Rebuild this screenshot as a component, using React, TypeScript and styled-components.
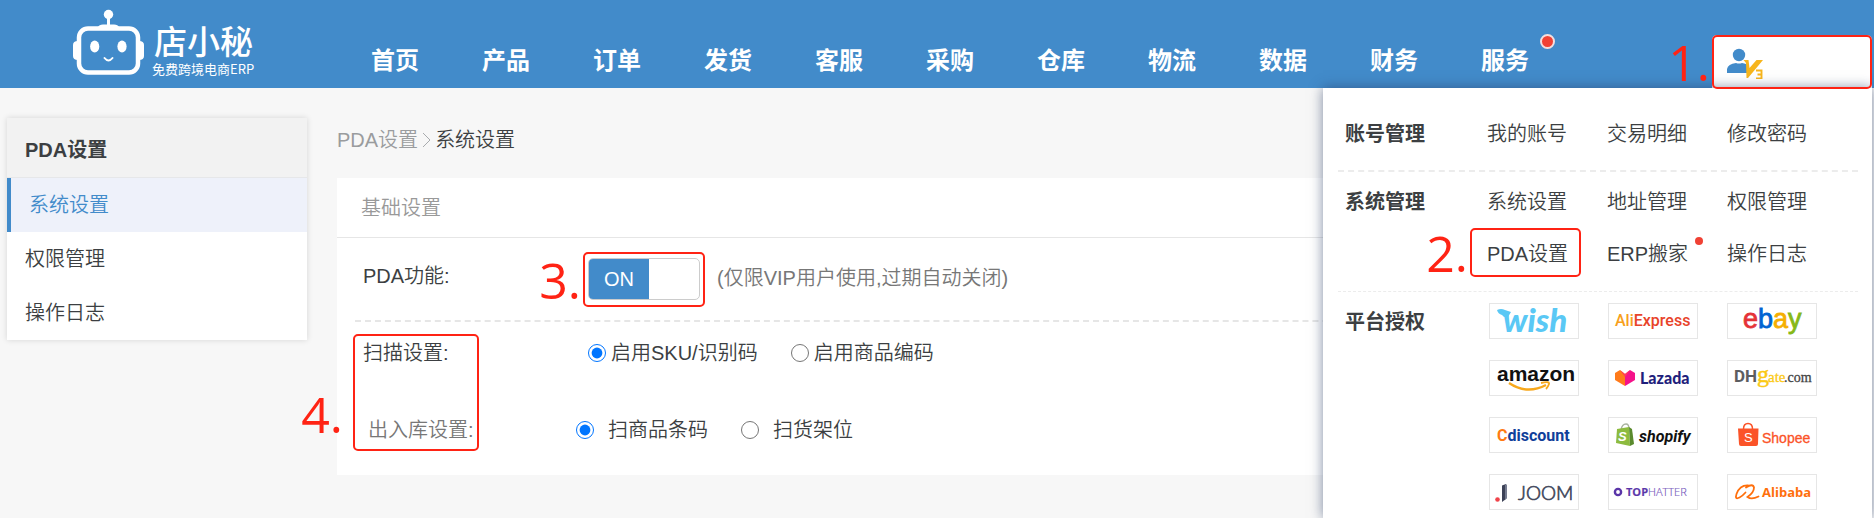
import React, { useState } from "react";
import styled, { createGlobalStyle, css } from "styled-components";

const blue = "#428bca";
const red = "#ff2314";
const ink = "#3c3f42";

const GlobalStyle = createGlobalStyle`
  * { box-sizing: border-box; }
  body {
    margin: 0;
    background: #f7f7f7;
    color: ${ink};
    font-family: "Liberation Sans", "Noto Sans CJK SC", sans-serif;
    font-size: 20px;
    font-weight: 350;
  }
  a { color: inherit; text-decoration: none; }
  button, input { font: inherit; margin: 0; }
  ul { list-style: none; margin: 0; padding: 0; }
  h2, h3, p { margin: 0; font-size: inherit; }
`;

/* ---------- step markers ---------- */

const Frame = styled.span<{ $inset: string; $width?: number }>`
  position: absolute;
  inset: ${(p) => p.$inset};
  ${(p) => p.$width && `width: ${p.$width}px;`}
  z-index: 3;
  display: flex;
  align-items: center;
  border: 2px solid ${red};
  border-radius: 5px;
  pointer-events: none;
`;

const StepNumber = styled.span<{ $low?: boolean }>`
  position: absolute;
  right: 100%;
  margin-right: ${(p) => (p.$low ? 12 : 4)}px;
  ${(p) => p.$low && "bottom: 10px;"}
  color: ${red};
  font: 400 50px/1 "Open Sans", "Noto Sans", sans-serif;
`;

type StepProps = { n: number; inset: string; width?: number; low?: boolean };

const Step = ({ n, inset, width, low }: StepProps) => (
  <Frame $inset={inset} $width={width}>
    <StepNumber $low={low}>{n}.</StepNumber>
  </Frame>
);

/* ---------- header ---------- */

const Header = styled.header`
  display: flex;
  height: 88px;
  padding: 0 2px 0 73px;
  background: ${blue};
`;

const LogoLink = styled.a`
  flex: none;
  width: 298px;
  color: #fff;
`;

const Nav = styled.nav`
  flex: 1;
  display: flex;
  gap: 63px;
  padding-top: 41px;
  color: #fff;
  font-size: 24px;
  font-weight: 700;
  line-height: 40px;
  white-space: nowrap;
`;

const NavLink = styled.a`
  position: relative;
`;

const dot = css`
  position: absolute;
  border-radius: 50%;
  background: #f04134;
`;

const NavDot = styled.span`
  ${dot}
  left: 100%;
  bottom: 100%;
  width: 15px;
  height: 15px;
  margin: 0 0 -8px 11px;
  border: 2px solid #f3dede;
`;

const MenuDot = styled.span`
  ${dot}
  left: 100%;
  top: 9px;
  width: 8px;
  height: 8px;
  margin-left: 7px;
`;

const Account = styled.div`
  position: relative;
  flex: none;
  align-self: flex-end;
  width: 160px;
`;

const AccountButton = styled.button`
  display: block;
  width: 100%;
  height: 53px;
  padding: 12px 14px;
  border: 0;
  border-radius: 5px 5px 0 0;
  background: #fff;
  text-align: left;
  cursor: pointer;
`;

const Menu = styled.div`
  position: absolute;
  top: 100%;
  right: 0;
  z-index: 2;
  width: 549px;
  padding: 0 14px 8px 15px;
  background: #fff;
  box-shadow: 0 0 12px rgba(40, 60, 100, 0.6);
`;

const MenuSection = styled.section<{ $pad: string; $line?: number }>`
  display: grid;
  grid-template-columns: 142px 1fr;
  padding: ${(p) => p.$pad};
  border-bottom: ${(p) => p.$line ?? 0}px dashed #ececec;
`;

const MenuTitle = styled.h3<{ $height?: number }>`
  line-height: ${(p) => p.$height ?? 52}px;
  font-weight: 700;
`;

const MenuLinks = styled.ul`
  display: grid;
  grid-template-columns: repeat(3, 120px);
  line-height: 52px;
`;

const MenuItem = styled.li`
  position: relative;
  justify-self: start;
`;

const Brands = styled.ul`
  display: grid;
  grid-template-columns: repeat(3, 90px);
  gap: 21px 29px;
  padding-left: 2px;
`;

const BrandLink = styled.a`
  display: block;
  height: 36px;
  border: 1px solid #e6e6e6;
  svg { display: block; }
`;

/* ---------- page ---------- */

const Page = styled.div`
  display: flex;
  align-items: flex-start;
  gap: 30px;
  padding: 30px 7px 43px;
`;

const Sidebar = styled.aside`
  flex: none;
  width: 300px;
  background: #fff;
  box-shadow: 0 0 6px rgba(0, 0, 0, 0.14);
`;

const SideTitle = styled.h2`
  padding: 5px 18px 0;
  border-bottom: 1px solid #e6e7e9;
  background: #f2f2f2;
  line-height: 54px;
  font-weight: 700;
`;

const SideLink = styled.a<{ $active?: boolean }>`
  display: block;
  padding: 0 18px;
  line-height: 54px;
  ${(p) =>
    p.$active &&
    css`
      border-left: 4px solid ${blue};
      background: #eef1fa;
      color: ${blue};
    `}
`;

const Main = styled.main`
  flex: 1;
  min-width: 0;
`;

const Breadcrumb = styled.nav`
  display: flex;
  align-items: center;
  gap: 4px;
  margin-bottom: 16px;
  line-height: 44px;
  a { color: #9a9c9e; }
`;

const Card = styled.section`
  padding-bottom: 27px;
  background: #fff;
`;

const CardTitle = styled.h2`
  padding: 2px 24px 0;
  border-bottom: 1px solid #e6e6e6;
  color: #999;
  font-weight: inherit;
  line-height: 57px;
`;

const Settings = styled.form`
  margin-left: 18px;
`;

const Row = styled.div`
  display: flex;
  align-items: flex-start;
  padding: 20px 8px;
  border-bottom: 2px dashed #e6e6e6;
  line-height: 36px;
`;

const RowLabel = styled.span`
  flex: none;
  width: 225px;
`;

const SwitchWrap = styled.span`
  position: relative;
  margin-right: 17px;
`;

const Switch = styled.button`
  display: flex;
  width: 112px;
  height: 42px;
  padding: 0;
  overflow: hidden;
  border: 1px solid #ccc;
  border-radius: 5px;
  background: #fff;
  cursor: pointer;
`;

const SwitchHalf = styled.span<{ $on: boolean }>`
  width: 60px;
  margin-left: ${(p) => (p.$on ? 0 : 50)}px;
  background: ${(p) => (p.$on ? blue : "#bbb")};
  color: #fff;
  font-weight: 400;
  line-height: 40px;
`;

const Hint = styled.p`
  line-height: 40px;
  color: #777;
`;

const ScanGroup = styled.div`
  position: relative;
  display: grid;
  gap: 41px;
  padding: 13px 8px 0;
`;

const Field = styled.fieldset<{ $nested?: boolean }>`
  display: flex;
  min-width: 0;
  margin: 0;
  padding: 0 0 0 ${(p) => (p.$nested ? 5 : 0)}px;
  border: 0;
  line-height: 36px;
`;

const FieldName = styled.span<{ $nested?: boolean }>`
  flex: none;
  width: ${(p) => (p.$nested ? 208 : 225)}px;
  color: ${(p) => (p.$nested ? "#777" : ink)};
`;

const Choice = styled.label<{ $wide?: boolean }>`
  display: flex;
  align-items: center;
  gap: ${(p) => (p.$wide ? 14 : 5)}px;
  margin-right: 33px;
  input { width: 18px; height: 18px; }
`;

/* ---------- drawings ---------- */

const Logo = () => (
  <svg width="190" height="88" viewBox="0 0 190 88" fill="none" role="img" aria-label="店小秘">
    <circle cx="35.500" cy="14.500" r="4.700" fill="#fff" />
    <path d="M35.500 17v9" stroke="#fff" strokeWidth="3" />
    <path d="M25 27q1-2.500 5-2.500h11q4 0 5 2.500z" fill="#fff" />
    <rect x="6" y="28.500" width="59" height="44" rx="9" stroke="#fff" strokeWidth="4.500" />
    <path d="M5 41q-5 0-5 4v11q0 4 5 4zM66 41q5 0 5 4v11q0 4-5 4z" fill="#fff" />
    <ellipse cx="21.700" cy="46.500" rx="4.600" ry="6" fill="#fff" />
    <ellipse cx="49" cy="46.500" rx="4.600" ry="6" fill="#fff" />
    <path d="M31.500 58q4 5 8 0" stroke="#fff" strokeWidth="2" strokeLinecap="round" />
    <g fill="#fff" fontFamily="Noto Sans CJK SC, sans-serif">
      <text x="81" y="54" fontSize="33" fontWeight="500">店小秘</text>
      <text x="79" y="74" fontSize="13" fontWeight="400">免费跨境电商ERP</text>
    </g>
  </svg>
);

const UserBadge = () => (
  <svg width="40" height="32" viewBox="0 0 40 32" aria-hidden="true">
    <circle cx="13" cy="8" r="6.200" fill="#428bca" />
    <path d="M1 26v-4q1-5 9-6 3 1 6 0 5 .6 6 3v7z" fill="#428bca" />
    <path d="M17.500 13h5l1 8 7-8H37L22 31h-1.500l-.5-15z" fill="#f7b51c" />
    <path d="M30 23.500h5.500v8H30M31.500 27.500h4" fill="none" stroke="#f7b51c" strokeWidth="1.900" />
  </svg>
);

const Chevron = () => (
  <svg width="9" height="16" viewBox="0 0 9 16" fill="none" stroke="#a8abae" aria-hidden="true">
    <path d="M1 1l7 7-7 7" />
  </svg>
);

const sans = "Open Sans, sans-serif";
const roboto = "Roboto, sans-serif";
const arial = "Liberation Sans, sans-serif";
const lato = "Lato, sans-serif";
const serif = "Liberation Serif, serif";

const brands: { name: string; art: React.ReactNode }[] = [
  {
    name: "Wish",
    art: (
      <g fill="#5ac8f5">
        <path d="M7 6q4-2 8 0 3 1 6 2l-3 5q-4 1-6-2-4-1-5-5z" />
        <text x="13" y="28" fontFamily={lato} fontSize="33" fontWeight="900" fontStyle="italic">wish</text>
      </g>
    ),
  },
  {
    name: "AliExpress",
    art: (
      <text x="6" y="22" fontFamily={roboto} fontSize="16" fontWeight="500" fill="#e8432a">
        <tspan fill="#f7a01c">Ali</tspan>Express
      </text>
    ),
  },
  {
    name: "eBay",
    art: (
      <text x="15" y="24" fontFamily={arial} fontSize="27" strokeWidth=".8">
        <tspan fill="#e53238" stroke="#e53238">e</tspan>
        <tspan fill="#0064d2" stroke="#0064d2">b</tspan>
        <tspan fill="#f5af02" stroke="#f5af02">a</tspan>
        <tspan fill="#86b817" stroke="#86b817">y</tspan>
      </text>
    ),
  },
  {
    name: "Amazon",
    art: (
      <g>
        <text x="7" y="20" fontFamily={arial} fontSize="21" fontWeight="700" fill="#111">amazon</text>
        <path d="M19 22q18 12 37 2" fill="none" stroke="#f7a81c" strokeWidth="2.400" />
        <path d="M51 22q9-2 8 1-1 3-3 5" fill="none" stroke="#f7a81c" strokeWidth="1.800" />
      </g>
    ),
  },
  {
    name: "Lazada",
    art: (
      <g>
        <path d="M6 12l5-3 5 4v12L6 19z" fill="#ff7a1a" />
        <path d="M26 12l-5-3-5 4v12l10-6z" fill="#f5128a" />
        <path d="M11 9l5 4 5-4-5 7z" fill="#ff3c5a" />
        <text x="31" y="23" fontFamily={lato} fontSize="16" fontWeight="900" fill="#1f1f7c">Lazada</text>
      </g>
    ),
  },
  {
    name: "DHgate",
    art: (
      <g>
        <text x="6" y="21" fontFamily={roboto} fontSize="17" fontWeight="700" fill="#5c5d60">DH</text>
        <text x="29" y="21" fontFamily={serif} fontSize="24" fill="#fbc914" stroke="#fbc914" strokeWidth=".5">g</text>
        <text x="40" y="21" fontFamily={serif} fontSize="15" fill="#fbc914" stroke="#fbc914" strokeWidth=".3">ate</text>
        <text x="56" y="21" fontFamily={serif} fontSize="14" fill="#444" stroke="#444" strokeWidth=".3">.com</text>
      </g>
    ),
  },
  {
    name: "Cdiscount",
    art: (
      <text x="7" y="23" fontFamily={roboto} fontSize="16" fontWeight="700" fill="#10409a">
        <tspan fill="#ff7a12">C</tspan>discount
      </text>
    ),
  },
  {
    name: "Shopify",
    art: (
      <g>
        <path d="M12 12q1-6 5-6 3 0 3 5" fill="none" stroke="#a9b3a0" strokeWidth="1.400" />
        <path d="M8 11l12-2 1 19-14-3z" fill="#8dbb3f" />
        <path d="M20 9l3 2 2 15-4 2z" fill="#5a8a2d" />
        <text x="9" y="23" fontFamily={arial} fontSize="13" fontWeight="700" fontStyle="italic" fill="#fff">S</text>
        <text x="30" y="24" fontFamily={roboto} fontSize="16" fontWeight="700" fontStyle="italic" fill="#111">shopify</text>
      </g>
    ),
  },
  {
    name: "Shopee",
    art: (
      <g>
        <path d="M15.500 11q0-5.500 4.500-5.500T24.500 11" fill="none" stroke="#fb5328" strokeWidth="1.500" />
        <path d="M10 10.500h20.500L30 26q0 2-2 2H13q-2 0-2-2z" fill="#fb5328" />
        <text x="16" y="24" fontFamily={arial} fontSize="13" fill="#fff">S</text>
        <text x="34" y="25" fontFamily={arial} fontSize="14" fill="#fb5328" stroke="#fb5328" strokeWidth=".3">Shopee</text>
      </g>
    ),
  },
  {
    name: "Joom",
    art: (
      <g>
        <circle cx="7.500" cy="24.500" r="2.300" fill="#f0434a" />
        <path d="M12 10.500l4-1.500v15l-4 3z" fill="#3c4257" />
        <path d="M15 9.500h2v14l-2 1z" fill="#767c90" />
        <text x="28" y="25" fontFamily={lato} fontSize="19" fill="#444a5e" stroke="#444a5e" strokeWidth=".7">JOOM</text>
      </g>
    ),
  },
  {
    name: "Tophatter",
    art: (
      <g>
        <circle cx="9" cy="17" r="3.100" fill="none" stroke="#5a35a8" strokeWidth="2.400" />
        <text x="17" y="21" fontFamily={sans} fontSize="11" fill="#7a5cc0" stroke="#7a5cc0" strokeWidth=".2">
          <tspan fontWeight="700" fill="#5a35a8">TOP</tspan>HATTER
        </text>
      </g>
    ),
  },
  {
    name: "Alibaba",
    art: (
      <g>
        <path
          d="M20 10.500Q12 10 8.500 19q-2 6 3 3.500 3-1.500 6-5M18 12.500q7-4.500 8 0 0 5-6.500 9.500 4 3 11-.5"
          fill="none"
          stroke="#ff6f0c"
          strokeWidth="1.800"
          strokeLinecap="round"
        />
        <text x="34" y="22" fontFamily={sans} fontSize="13" fontWeight="700" fill="#ff6f0c">Alibaba</text>
      </g>
    ),
  },
];

const navItems = ["首页", "产品", "订单", "发货", "客服", "采购", "仓库", "物流", "数据", "财务", "服务"];
const accountLinks = ["我的账号", "交易明细", "修改密码"];
const systemLinks = ["系统设置", "地址管理", "权限管理", "PDA设置", "ERP搬家", "操作日志"];

const AccountMenu = () => (
  <Menu>
    <MenuSection $pad="20px 0 10px 7px" $line={2}>
      <MenuTitle>账号管理</MenuTitle>
      <MenuLinks>
        {accountLinks.map((t) => (
          <MenuItem key={t}><a href="#">{t}</a></MenuItem>
        ))}
      </MenuLinks>
    </MenuSection>
    <MenuSection $pad="4px 0 11px 7px" $line={1}>
      <MenuTitle>系统管理</MenuTitle>
      <MenuLinks>
        {systemLinks.map((t) => (
          <MenuItem key={t}>
            <a href="#">{t}</a>
            {t === "PDA设置" && <Step n={2} inset="0 -13px 3px -17px" />}
            {t === "ERP搬家" && <MenuDot />}
          </MenuItem>
        ))}
      </MenuLinks>
    </MenuSection>
    <MenuSection $pad="11px 0 0 7px">
      <MenuTitle $height={38}>平台授权</MenuTitle>
      <Brands>
        {brands.map((b) => (
          <li key={b.name}>
            <BrandLink href="#" aria-label={b.name}>
              <svg width="88" height="34" viewBox="0 0 88 34">{b.art}</svg>
            </BrandLink>
          </li>
        ))}
      </Brands>
    </MenuSection>
  </Menu>
);

export default function App() {
  const [on, setOn] = useState(true);
  return (
    <>
      <GlobalStyle />
      <Header>
        <LogoLink href="#"><Logo /></LogoLink>
        <Nav>
          {navItems.map((t) => (
            <NavLink key={t} href="#">
              {t}
              {t === "服务" && <NavDot />}
            </NavLink>
          ))}
        </Nav>
        <Account>
          <AccountButton type="button" aria-label="账号"><UserBadge /></AccountButton>
          <AccountMenu />
          <Step n={1} inset="0 0 -1px 0" />
        </Account>
      </Header>
      <Page>
        <Sidebar>
          <SideTitle>PDA设置</SideTitle>
          <SideLink href="#" $active>系统设置</SideLink>
          <SideLink href="#">权限管理</SideLink>
          <SideLink href="#">操作日志</SideLink>
        </Sidebar>
        <Main>
          <Breadcrumb>
            <a href="#">PDA设置</a>
            <Chevron />
            <span>系统设置</span>
          </Breadcrumb>
          <Card>
            <CardTitle>基础设置</CardTitle>
            <Settings>
              <Row>
                <RowLabel id="pda-label">PDA功能:</RowLabel>
                <SwitchWrap>
                  <Switch
                    type="button"
                    role="switch"
                    aria-checked={on}
                    aria-labelledby="pda-label"
                    onClick={() => setOn(!on)}
                  >
                    <SwitchHalf $on={on}>{on ? "ON" : "OFF"}</SwitchHalf>
                  </Switch>
                  <Step n={3} inset="-6px -5px -7px -5px" />
                </SwitchWrap>
                <Hint>(仅限VIP用户使用,过期自动关闭)</Hint>
              </Row>
              <ScanGroup>
                <Field aria-labelledby="scan-label">
                  <FieldName id="scan-label">扫描设置:</FieldName>
                  <Choice><input type="radio" name="scan" defaultChecked />启用SKU/识别码</Choice>
                  <Choice><input type="radio" name="scan" />启用商品编码</Choice>
                </Field>
                <Field $nested aria-labelledby="stock-label">
                  <FieldName $nested id="stock-label">出入库设置:</FieldName>
                  <Choice $wide><input type="radio" name="stock" defaultChecked />扫商品条码</Choice>
                  <Choice $wide><input type="radio" name="stock" />扫货架位</Choice>
                </Field>
                <Step n={4} inset="12px auto -3px -2px" width={126} low />
              </ScanGroup>
            </Settings>
          </Card>
        </Main>
      </Page>
    </>
  );
}
